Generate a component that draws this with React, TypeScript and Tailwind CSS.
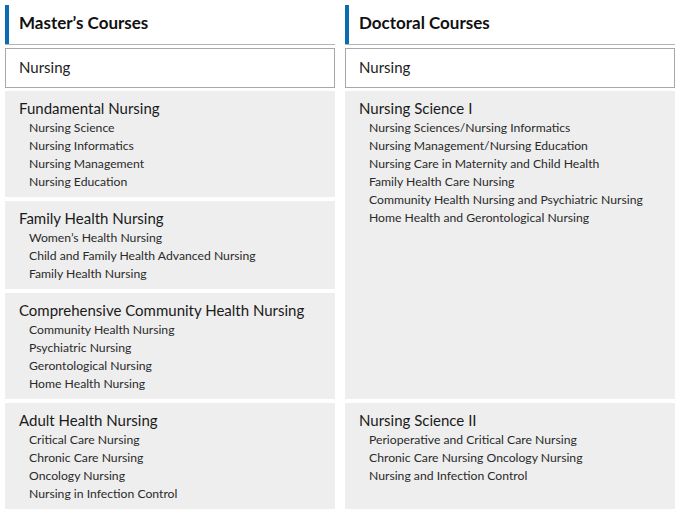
const masters = [
  {
    title: "Fundamental Nursing",
    items: ["Nursing Science", "Nursing Informatics", "Nursing Management", "Nursing Education"],
  },
  {
    title: "Family Health Nursing",
    items: ["Women’s Health Nursing", "Child and Family Health Advanced Nursing", "Family Health Nursing"],
  },
  {
    title: "Comprehensive Community Health Nursing",
    items: ["Community Health Nursing", "Psychiatric Nursing", "Gerontological Nursing", "Home Health Nursing"],
  },
  {
    title: "Adult Health Nursing",
    items: ["Critical Care Nursing", "Chronic Care Nursing", "Oncology Nursing", "Nursing in Infection Control"],
  },
]

const doctoral = [
  {
    title: "Nursing Science I",
    items: [
      "Nursing Sciences/Nursing Informatics",
      "Nursing Management/Nursing Education",
      "Nursing Care in Maternity and Child Health",
      "Family Health Care Nursing",
      "Community Health Nursing and Psychiatric Nursing",
      "Home Health and Gerontological Nursing",
    ],
  },
  {
    title: "Nursing Science II",
    items: [
      "Perioperative and Critical Care Nursing",
      "Chronic Care Nursing Oncology Nursing",
      "Nursing and Infection Control",
    ],
  },
]

function Heading({ label }: { label: string }) {
  return (
    <div className="flex h-[40px] items-stretch border-b border-[#b4b4b4]">
      <div className="w-[4px] bg-[#0a6db3]" />
      <h2 className="flex items-center pb-[4px] pl-[10px] text-[17px] font-bold text-[#111]">{label}</h2>
    </div>
  )
}

function Program() {
  return (
    <div className="flex h-[40px] items-center border border-[#a8a8a8] bg-white pb-[1px] pl-[13px] text-[15px] text-[#222]">
      Nursing
    </div>
  )
}

function Track({ track, className = "" }: { track: { title: string; items: string[] }; className?: string }) {
  return (
    <div className={`bg-[#eeeeee] px-[14px] pt-[7px] pb-[6px] ${className}`}>
      <h3 className="text-[15px] leading-[21px] text-[#1a1a1a]">{track.title}</h3>
      <ul className="pl-[10px]">
        {track.items.map((item) => (
          <li key={item} className="text-[12.2px] leading-[18px] text-[#2a2a2a]">
            {item}
          </li>
        ))}
      </ul>
    </div>
  )
}

export default function App() {
  return (
    <div className="min-h-[516px] w-[680px] bg-white px-[5px] pt-[5px] font-['Lato',sans-serif]">
      <div className="grid grid-cols-2 gap-x-[10px]">
        <Heading label="Master’s Courses" />
        <Heading label="Doctoral Courses" />
      </div>
      <div className="mt-[3px] grid grid-cols-2 gap-x-[10px]">
        <Program />
        <Program />
      </div>
      <div className="mt-[3px] grid grid-cols-2 gap-x-[10px] gap-y-[4px]">
        <Track track={masters[0]} className="col-start-1 row-start-1" />
        <Track track={masters[1]} className="col-start-1 row-start-2" />
        <Track track={masters[2]} className="col-start-1 row-start-3" />
        <Track track={masters[3]} className="col-start-1 row-start-4" />
        <Track track={doctoral[0]} className="col-start-2 row-start-1 row-span-3" />
        <Track track={doctoral[1]} className="col-start-2 row-start-4" />
      </div>
    </div>
  )
}
